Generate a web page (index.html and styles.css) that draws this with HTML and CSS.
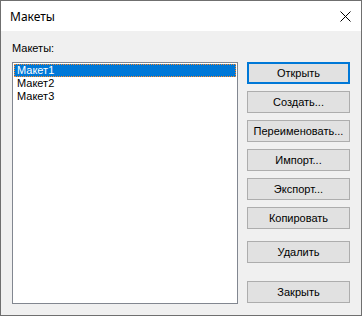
FILE: index.html
```html
<!DOCTYPE html>
<html lang="ru">
<head>
    <meta charset="UTF-8">
    <title>Макеты</title>
    <link rel="stylesheet" href="styles.css">
</head>
<body>
    <div class="window">
        <div class="titlebar">
            <span class="title">Макеты</span>
            <span class="close">
                <svg width="11" height="11" viewBox="0 0 11 11">
                    <path d="M0.5 0.5 L10.5 10.5 M10.5 0.5 L0.5 10.5" stroke="#000" stroke-width="1" fill="none"/>
                </svg>
            </span>
        </div>
        <div class="content">
            <div class="left">
                <div class="label">Макеты:</div>
                <div class="listbox">
                    <div class="item selected">Макет1</div>
                    <div class="item">Макет2</div>
                    <div class="item">Макет3</div>
                </div>
            </div>
            <div class="buttons">
                <button class="btn default">Открыть</button>
                <button class="btn">Создать...</button>
                <button class="btn">Переименовать...</button>
                <button class="btn">Импорт...</button>
                <button class="btn">Экспорт...</button>
                <button class="btn">Копировать</button>
                <button class="btn delete">Удалить</button>
                <button class="btn closebtn">Закрыть</button>
            </div>
        </div>
    </div>
</body>
</html>
```

FILE: styles.css
```css
body {
    margin: 0;
    font-family: "Liberation Sans", Arial, sans-serif;
    font-size: 11px;
}
.window {
    width: 362px;
    height: 316px;
    box-sizing: border-box;
    border: 1px solid #6f6f6f;
    display: flex;
    flex-direction: column;
    background-color: #f0f0f0;
}
.titlebar {
    height: 30px;
    background-color: #fff;
    display: flex;
    align-items: center;
    justify-content: space-between;
}
.title {
    font-family: "Noto Sans", sans-serif;
    font-size: 12px;
    margin-left: 9px;
    color: #000;
}
.close {
    display: flex;
    margin-right: 10px;
}
.content {
    flex: 1;
    display: flex;
    padding: 10px 10px 11px 11px;
}
.left {
    display: flex;
    flex-direction: column;
}
.label {
    height: 20px;
    line-height: 13px;
    margin-top: 1px;
}
.listbox {
    width: 222px;
    flex: 1;
    border: 1px solid #828790;
    background-color: #fff;
    padding: 1px;
}
.item {
    height: 13px;
    box-sizing: border-box;
    line-height: 11px;
    padding-left: 2px;
    border: 1px solid transparent;
}
.selected {
    background-color: #0078d7;
    color: #fff;
    border: 1px dotted #ff8a28;
}
.buttons {
    margin-left: 9px;
    margin-top: 21px;
    display: flex;
    flex-direction: column;
    gap: 7px;
    padding-bottom: 1px;
}
.btn {
    width: 103px;
    height: 22px;
    box-sizing: border-box;
    background-color: #e1e1e1;
    border: 1px solid #adadad;
    font-family: "Liberation Sans", Arial, sans-serif;
    font-size: 11px;
    color: #000;
    padding: 0;
}
.default {
    border: 2px solid #0078d7;
}
.delete {
    margin-top: 5px;
}
.closebtn {
    margin-top: auto;
}
```
